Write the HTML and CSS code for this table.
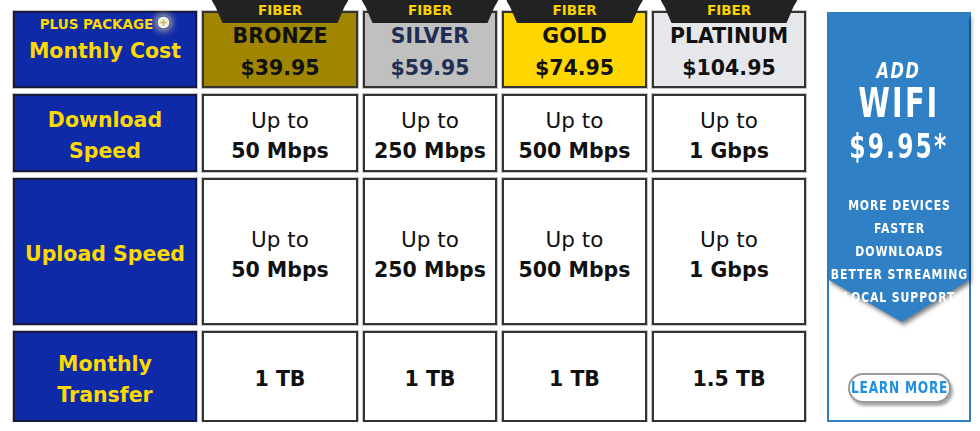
FILE: index.html
```html
<!DOCTYPE html>
<html>
<head>
<meta charset="utf-8">
<link rel="stylesheet" href="styles.css">
</head>
<body>
<div class="page">
  <div class="grid">
    <div class="cell label head">
      <div class="plus-line">PLUS PACKAGE <span class="plus-icon"><svg width="13" height="13" viewBox="0 0 13 13"><circle cx="6.5" cy="6.5" r="6" fill="#f4f1de"/><path d="M6.5 3.2v6.6M3.2 6.5h6.6" stroke="#c9b65a" stroke-width="1.6"/></svg></span></div>
      <div class="big">Monthly Cost</div>
    </div>
    <div class="cell tier bronze"><div class="ribbon">FIBER</div><div>BRONZE</div><div>$39.95</div></div>
    <div class="cell tier silver"><div class="ribbon">FIBER</div><div>SILVER</div><div>$59.95</div></div>
    <div class="cell tier gold"><div class="ribbon">FIBER</div><div>GOLD</div><div>$74.95</div></div>
    <div class="cell tier platinum"><div class="ribbon">FIBER</div><div>PLATINUM</div><div>$104.95</div></div>

    <div class="cell label body"><div class="big">Download<br>Speed</div></div>
    <div class="cell val"><span class="up">Up to</span><b>50 Mbps</b></div>
    <div class="cell val"><span class="up">Up to</span><b>250 Mbps</b></div>
    <div class="cell val"><span class="up">Up to</span><b>500 Mbps</b></div>
    <div class="cell val"><span class="up">Up to</span><b>1 Gbps</b></div>

    <div class="cell label body"><div class="big">Upload Speed</div></div>
    <div class="cell val"><span class="up">Up to</span><b>50 Mbps</b></div>
    <div class="cell val"><span class="up">Up to</span><b>250 Mbps</b></div>
    <div class="cell val"><span class="up">Up to</span><b>500 Mbps</b></div>
    <div class="cell val"><span class="up">Up to</span><b>1 Gbps</b></div>

    <div class="cell label body"><div class="big">Monthly<br>Transfer</div></div>
    <div class="cell val"><b>1 TB</b></div>
    <div class="cell val"><b>1 TB</b></div>
    <div class="cell val"><b>1 TB</b></div>
    <div class="cell val"><b>1.5 TB</b></div>
  </div>

  <div class="wifi">
    <div class="wifi-shape"><div class="wifi-fill"></div></div>
    <div class="wifi-text">
      <div class="add">ADD</div>
      <div class="wifi-title">WIFI</div>
      <div class="wifi-price">$9.95*</div>
      <ul class="perks">
        <li>MORE DEVICES</li>
        <li>FASTER</li>
        <li>DOWNLOADS</li>
        <li>BETTER STREAMING</li>
        <li>LOCAL SUPPORT</li>
      </ul>
    </div>
    <a class="learn" href="#"><span class="learn-text">LEARN MORE</span></a>
  </div>
</div>
</body>
</html>
```

FILE: styles.css
```css
* { box-sizing: border-box; }
html, body { margin: 0; padding: 0; background: #fff; }
body { font-family: "DejaVu Sans", "Open Sans", sans-serif; }

.page {
  display: flex;
  align-items: flex-start;
  padding: 11px 0 0 13px;
}

.grid {
  display: grid;
  grid-template-columns: 184px 156px 134px 145px 154px;
  grid-template-rows: 77px 78px 147px 91px;
  column-gap: 5px;
  row-gap: 6px;
}

.cell {
  position: relative;
  border: 2px solid #333;
  box-shadow: 0 0 0 1px #c4c4c4;
  display: flex;
  flex-direction: column;
  align-items: center;
  justify-content: center;
  text-align: center;
}

.label {
  background: #0f2aa7;
  border-color: #151a40;
  color: #fcd900;
  font-weight: 700;
}
.label .big { font-size: 20.5px; line-height: 31px; }
.label.body, .val { padding-top: 6px; }
.label.head { justify-content: flex-start; }
.plus-line {
  font-size: 13.5px;
  line-height: 20px;
  margin-top: 1px;
  display: flex;
  align-items: center;
  gap: 4px;
}
.plus-icon {
  display: inline-flex;
  width: 13px;
  height: 13px;
  border-radius: 50%;
  box-shadow: 0 0 6px 3px rgba(255, 236, 150, 0.55);
  margin-top: -3px;
}
.label.head .big { margin-top: 3px; line-height: 28px; }

.tier {
  font-weight: 700;
  font-size: 20.5px;
  line-height: 32px;
  color: #111;
  justify-content: flex-start;
  padding-top: 7px;
}
.bronze { background: #9f8500; }
.silver { background: #c0c0c0; color: #1f2e52; }
.gold { background: #fed600; }
.platinum { background: #e6e7eb; }

.ribbon {
  position: absolute;
  top: -13px;
  left: 50%;
  transform: translateX(-50%);
  width: 137px;
  height: 23px;
  background: #222;
  color: #f7d200;
  font-size: 13.5px;
  line-height: 21px;
  font-weight: 700;
  clip-path: polygon(0 0, 100% 0, 97% 30%, calc(100% - 11px) 100%, 11px 100%, 3% 30%);
}

.val {
  background: #fff;
  color: #111;
  font-size: 20.5px;
  line-height: 31px;
}
.val .up { font-weight: 400; font-size: 21.5px; }
.val b { font-weight: 700; }

.wifi {
  position: relative;
  margin-left: 21px;
  margin-top: 1px;
  width: 144px;
  height: 410px;
  border: 2px solid #3080c5;
  background: #fff;
  display: flex;
  flex-direction: column;
  align-items: center;
  color: #fff;
}
.wifi-shape {
  position: absolute;
  left: 0;
  top: 0;
  right: 0;
  height: 308px;
  filter: drop-shadow(2px 3px 2px rgba(0, 0, 0, 0.5));
}
.wifi-fill {
  width: 100%;
  height: 100%;
  background: #3080c5;
  clip-path: polygon(0 0, 100% 0, 100% 266px, 52% 100%, 0 266px);
}
.wifi-text {
  position: relative;
  display: flex;
  flex-direction: column;
  align-items: center;
  font-weight: 700;
  white-space: nowrap;
}
.add {
  margin-top: 47px;
  font-size: 21px;
  line-height: 20px;
  font-style: italic;
  letter-spacing: 2px;
  transform: scaleX(0.77);
}
.wifi-title {
  margin-top: 4px;
  font-size: 41px;
  line-height: 36px;
  letter-spacing: 3px;
  transform: scaleX(0.7);
}
.wifi-price {
  font-size: 33px;
  line-height: 36px;
  letter-spacing: 3px;
  margin-top: 8px;
  transform: scaleX(0.71);
}
.perks {
  list-style: none;
  margin: 29px 0 0;
  padding: 0;
  font-size: 14.5px;
  line-height: 23px;
  letter-spacing: 1.2px;
  text-align: center;
  transform: scaleX(0.75);
}
.learn {
  position: relative;
  margin-top: auto;
  margin-bottom: 17px;
  width: 103px;
  height: 30px;
  border: 2px solid #9a9a9a;
  border-radius: 15px;
  background: #fff;
  box-shadow: 2px 3px 3px rgba(0, 0, 0, 0.35);
  color: #1e8fe0;
  font-weight: 700;
  font-size: 16.5px;
  line-height: 26px;
  text-decoration: none;
  white-space: nowrap;
  display: flex;
  justify-content: center;
}
.learn-text {
  display: inline-block;
  letter-spacing: 1px;
  margin-right: -1px;
  transform: scaleX(0.74);
}
```
